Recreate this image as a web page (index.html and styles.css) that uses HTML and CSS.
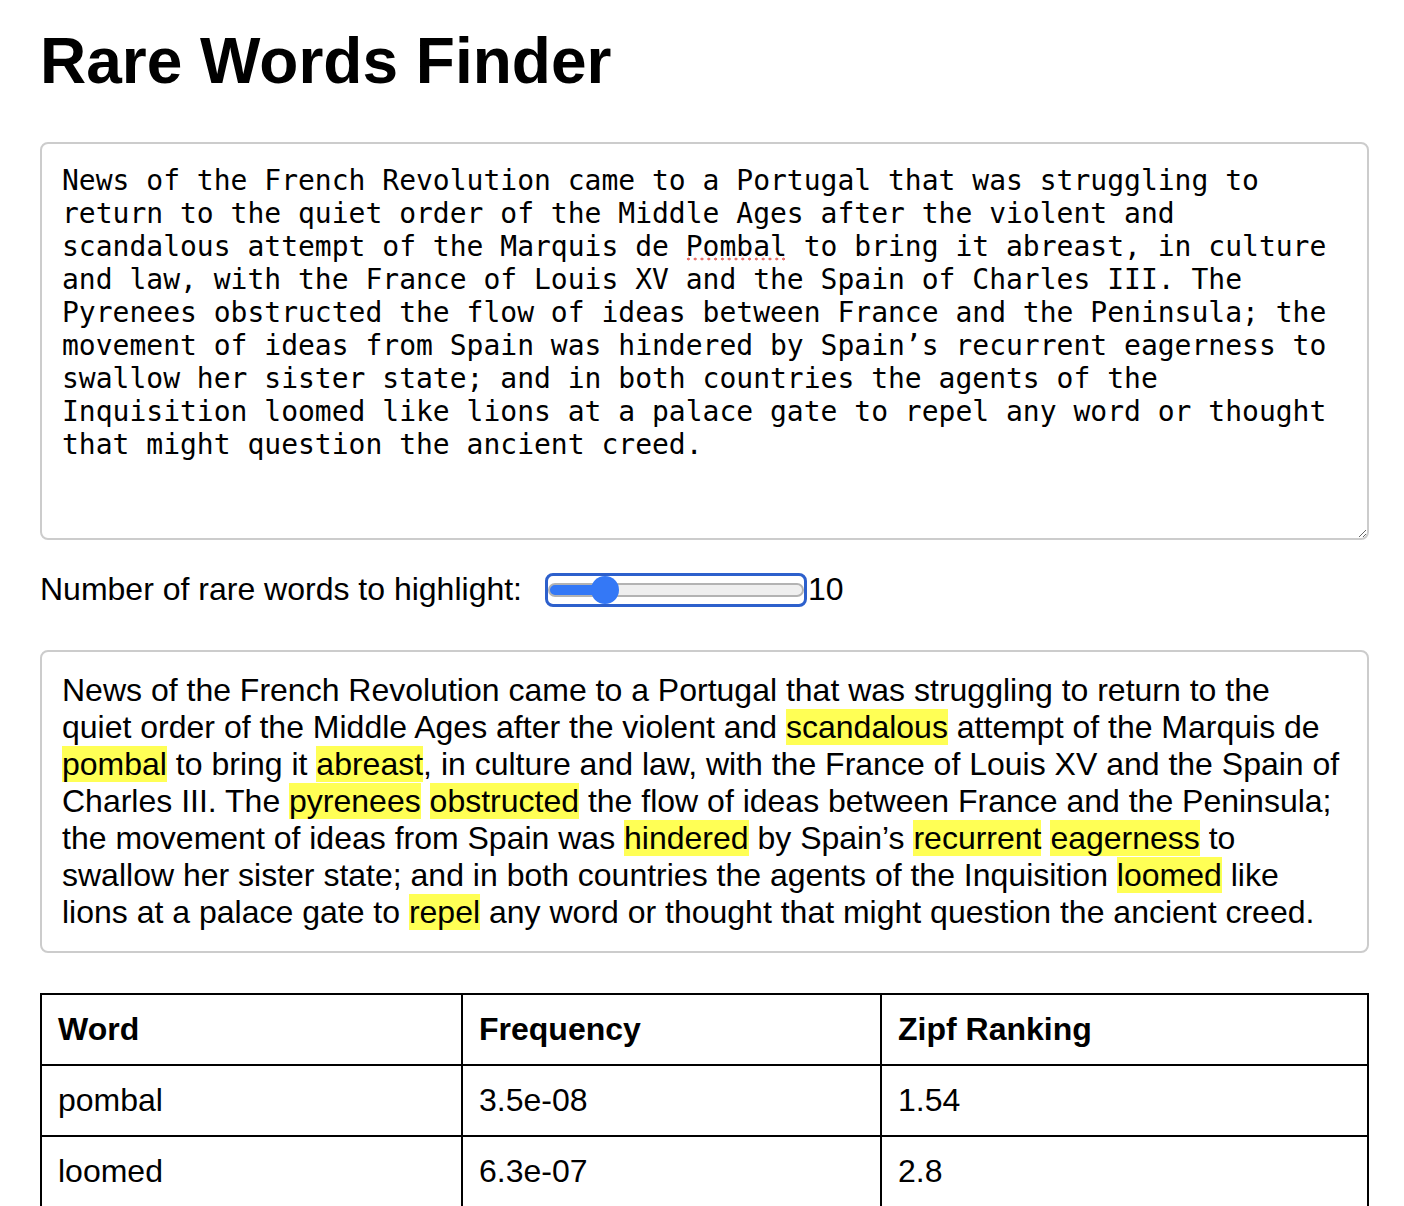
FILE: index.html
```html
<!DOCTYPE html>
<html lang="en">
<head>
<meta charset="utf-8">
<title>Rare Words Finder</title>
<link rel="stylesheet" href="styles.css">
</head>
<body>
<main class="page">
  <h1 class="title">Rare Words Finder</h1>

  <div class="editor">
    <textarea class="source" spellcheck="false">News of the French Revolution came to a Portugal that was struggling to return to the quiet order of the Middle Ages after the violent and scandalous attempt of the Marquis de Pombal to bring it abreast, in culture and law, with the France of Louis XV and the Spain of Charles III. The Pyrenees obstructed the flow of ideas between France and the Peninsula; the movement of ideas from Spain was hindered by Spain’s recurrent eagerness to swallow her sister state; and in both countries the agents of the Inquisition loomed like lions at a palace gate to repel any word or thought that might question the ancient creed.</textarea>
    <span class="spell-mark" aria-hidden="true"></span>
  </div>

  <div class="control-row">
    <label class="control-label" for="count">Number of rare words to highlight:</label>
    <input class="slider" id="count" type="range" min="1" max="50" value="10" style="--p: 18.4%">
    <span class="slider-value">10</span>
  </div>

  <div class="output">News of the French Revolution came to a Portugal that was struggling to return to the quiet order of the Middle Ages after the violent and <mark class="hl">scandalous</mark> attempt of the Marquis de <mark class="hl">pombal</mark> to bring it <mark class="hl">abreast</mark>, in culture and law, with the France of Louis XV and the Spain of Charles III. The <mark class="hl">pyrenees</mark> <mark class="hl">obstructed</mark> the flow of ideas between France and the Peninsula; the movement of ideas from Spain was <mark class="hl">hindered</mark> by Spain’s <mark class="hl">recurrent</mark> <mark class="hl">eagerness</mark> to swallow her sister state; and in both countries the agents of the Inquisition <mark class="hl">loomed</mark> like lions at a palace gate to <mark class="hl">repel</mark> any word or thought that might question the ancient creed.</div>

  <table class="words">
    <colgroup>
      <col class="col-word">
      <col class="col-freq">
      <col>
    </colgroup>
    <thead>
      <tr><th>Word</th><th>Frequency</th><th>Zipf Ranking</th></tr>
    </thead>
    <tbody>
      <tr><td>pombal</td><td>3.5e-08</td><td>1.54</td></tr>
      <tr><td>loomed</td><td>6.3e-07</td><td>2.8</td></tr>
    </tbody>
  </table>
</main>
</body>
</html>
```

FILE: styles.css
```css
html, body {
  margin: 0;
  padding: 0;
  background: #ffffff;
  color: #000000;
}

body {
  font-family: "Liberation Sans", Arial, sans-serif;
  font-size: 32px;
}

.page {
  width: 1329px;
  margin-left: 40px;
  padding-bottom: 40px;
}

.title {
  font-size: 64px;
  font-weight: bold;
  line-height: 74px;
  margin: 24px 0 44px 0;
}

.editor {
  position: relative;
}

.source {
  display: block;
  box-sizing: border-box;
  width: 100%;
  height: 398px;
  margin: 0;
  padding: 20px;
  border: 2px solid #cccccc;
  border-radius: 8px;
  font-family: "DejaVu Sans Mono", "Liberation Mono", monospace;
  font-size: 28px;
  line-height: 33px;
  color: #000000;
  background: #ffffff;
  outline: none;
}

.spell-mark {
  position: absolute;
  left: 645px;
  top: 115px;
  width: 102px;
  height: 4px;
  background-image: radial-gradient(circle, #e8716b 1.3px, transparent 1.7px);
  background-size: 6.8px 4px;
  background-repeat: repeat-x;
  pointer-events: none;
}

.control-row {
  display: flex;
  align-items: center;
  margin-top: 31px;
  height: 37px;
}

.control-label {
  margin-right: 26px;
  line-height: 37px;
}

.slider {
  -webkit-appearance: none;
  appearance: none;
  width: 256px;
  height: 28px;
  margin: 0;
  padding: 0;
  background: transparent;
  border-radius: 5px;
  outline: 3px solid #2d60cc;
  outline-offset: 0;
}

.slider::-webkit-slider-runnable-track {
  height: 14px;
  box-sizing: border-box;
  border: 2px solid #b3b3b3;
  border-radius: 7px;
  background: linear-gradient(to right, #3478f6 0, #3478f6 var(--p), #efefef var(--p), #efefef 100%);
}

.slider::-webkit-slider-thumb {
  -webkit-appearance: none;
  appearance: none;
  width: 28px;
  height: 28px;
  margin-top: -9px;
  border: none;
  border-radius: 50%;
  background: #3478f6;
}

.slider-value {
  margin-left: 4px;
  line-height: 37px;
}

.output {
  margin-top: 42px;
  padding: 20px 24px 20px 20px;
  border: 2px solid #cccccc;
  border-radius: 8px;
  line-height: 37px;
}

.hl {
  background: #ffff55;
  color: #000000;
}

.words {
  width: 100%;
  margin-top: 40px;
  border-collapse: collapse;
  table-layout: fixed;
}

.col-word {
  width: 421px;
}

.col-freq {
  width: 419px;
}

.words th,
.words td {
  border: 2px solid #000000;
  padding: 16px;
  text-align: left;
  line-height: 37px;
  font-size: 32px;
}

.words th {
  font-weight: bold;
}
```
